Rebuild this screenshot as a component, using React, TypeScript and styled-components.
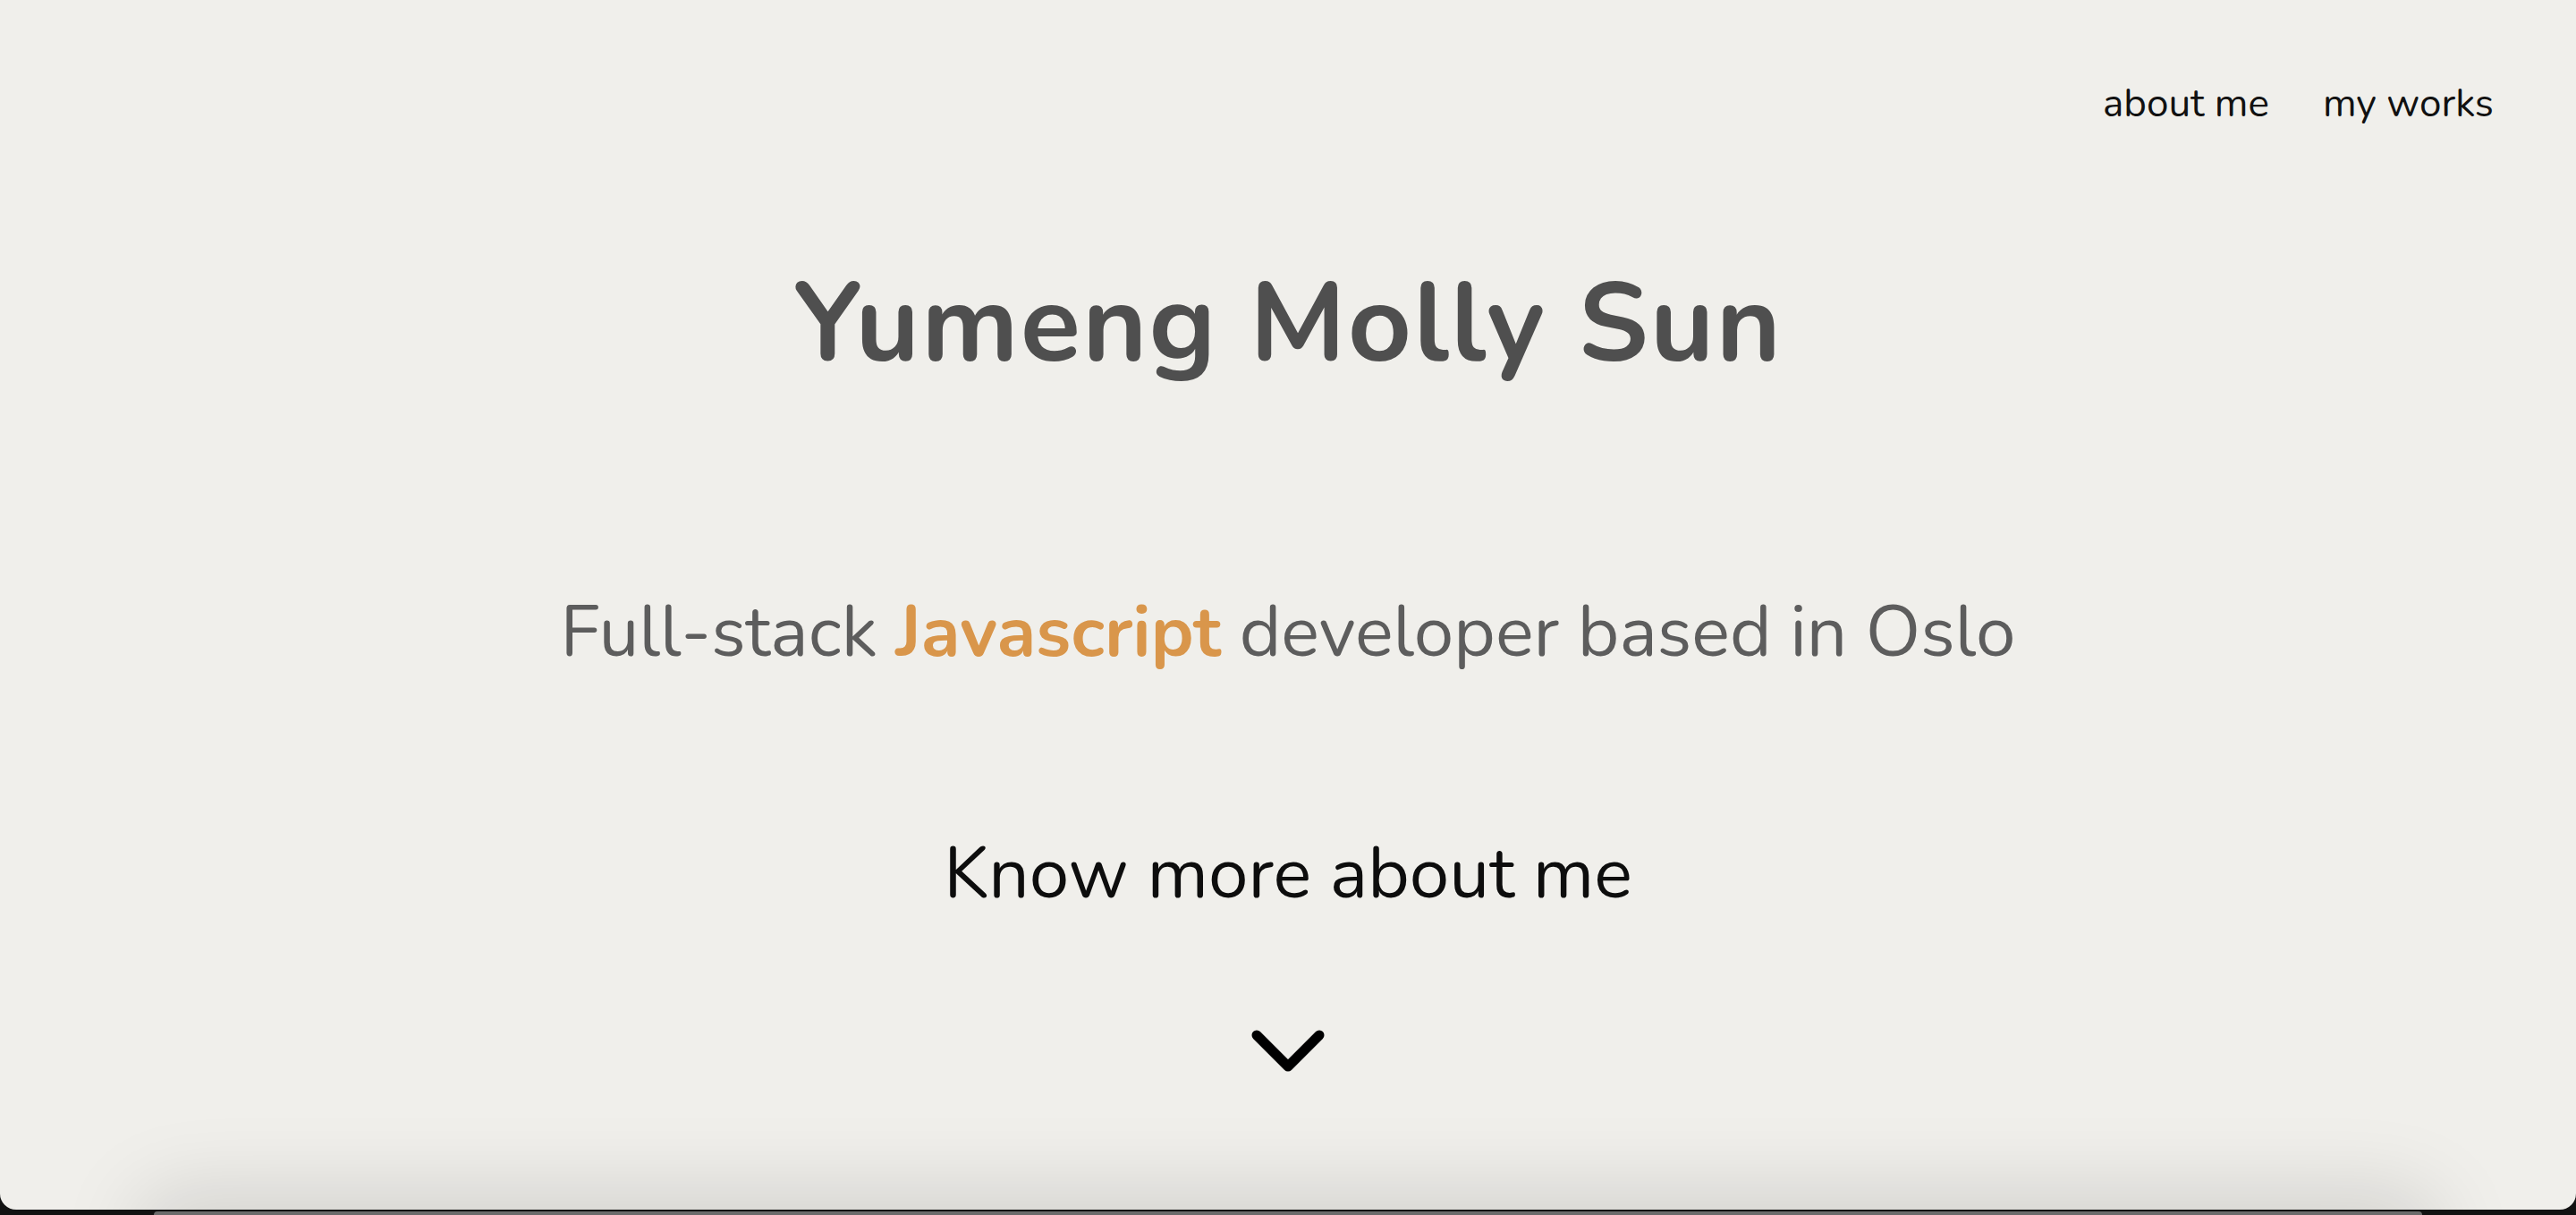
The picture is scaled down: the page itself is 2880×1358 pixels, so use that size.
import * as React from 'react';
import styled, { createGlobalStyle } from 'styled-components';

const GlobalStyle = createGlobalStyle`
  * {
    box-sizing: border-box;
  }
  html,
  body {
    margin: 0;
    padding: 0;
    background: #121212;
  }
  body {
    font-family: 'Nunito', 'Noto Sans', 'Open Sans', sans-serif;
  }
`;

const Page = styled.div`
  width: 2880px;
  height: 1358px;
  overflow: hidden;
  background: #121212;
`;

const Card = styled.section`
  position: relative;
  height: 1352px;
  background: #f0efeb;
  border-radius: 0 0 18px 18px;
  overflow: hidden;
  display: flex;
  flex-direction: column;
`;

const Nav = styled.nav`
  display: flex;
  justify-content: flex-end;
  gap: 60px;
  padding: 94px 92px 0 0;
`;

const NavLink = styled.a`
  font-size: 44px;
  line-height: 1;
  color: #111;
  text-decoration: none;
  cursor: pointer;
`;

const Hero = styled.div`
  display: flex;
  flex-direction: column;
  align-items: center;
  text-align: center;
`;

const Title = styled.h1`
  margin: 163px 0 0;
  font-size: 124px;
  line-height: 1;
  font-weight: 700;
  letter-spacing: 2px;
  color: #4f4f4f;
`;

const Subtitle = styled.p`
  margin: 242px 0 0;
  font-size: 80px;
  line-height: 1;
  color: #5d5d5d;
`;

const Accent = styled.span`
  font-weight: 700;
  color: #d9964b;
`;

const More = styled.a`
  margin-top: 190px;
  font-size: 80px;
  line-height: 1;
  color: #0d0d0d;
  text-decoration: none;
  cursor: pointer;
`;

const Arrow = styled.span`
  margin-top: 134px;
  display: flex;
`;

const Shade = styled.div`
  position: absolute;
  left: 170px;
  right: 170px;
  bottom: -60px;
  height: 60px;
  border-radius: 60px;
  box-shadow: 0 0 90px 20px rgba(0, 0, 0, 0.13);
`;

const Below = styled.div`
  display: flex;
  padding: 2px 172px 0;
  height: 6px;
`;

const NextPanel = styled.div`
  flex: 1;
  background: #6b6b6b;
  border-radius: 20px 20px 0 0;
`;

const App: React.FC = () => {
  return (
    <Page>
      <GlobalStyle />
      <Card>
        <Nav>
          <NavLink>about me</NavLink>
          <NavLink>my works</NavLink>
        </Nav>
        <Hero>
          <Title>Yumeng Molly Sun</Title>
          <Subtitle>
            Full-stack <Accent>Javascript</Accent> developer based in Oslo
          </Subtitle>
          <More>Know more about me</More>
          <Arrow>
            <svg width="82" height="50" viewBox="0 0 82 50" fill="none">
              <path d="M6 6l35 35 35-35" stroke="#000" strokeWidth="11" strokeLinecap="round" strokeLinejoin="round" />
            </svg>
          </Arrow>
        </Hero>
        <Shade />
      </Card>
      <Below>
        <NextPanel />
      </Below>
    </Page>
  );
};

export default App;
